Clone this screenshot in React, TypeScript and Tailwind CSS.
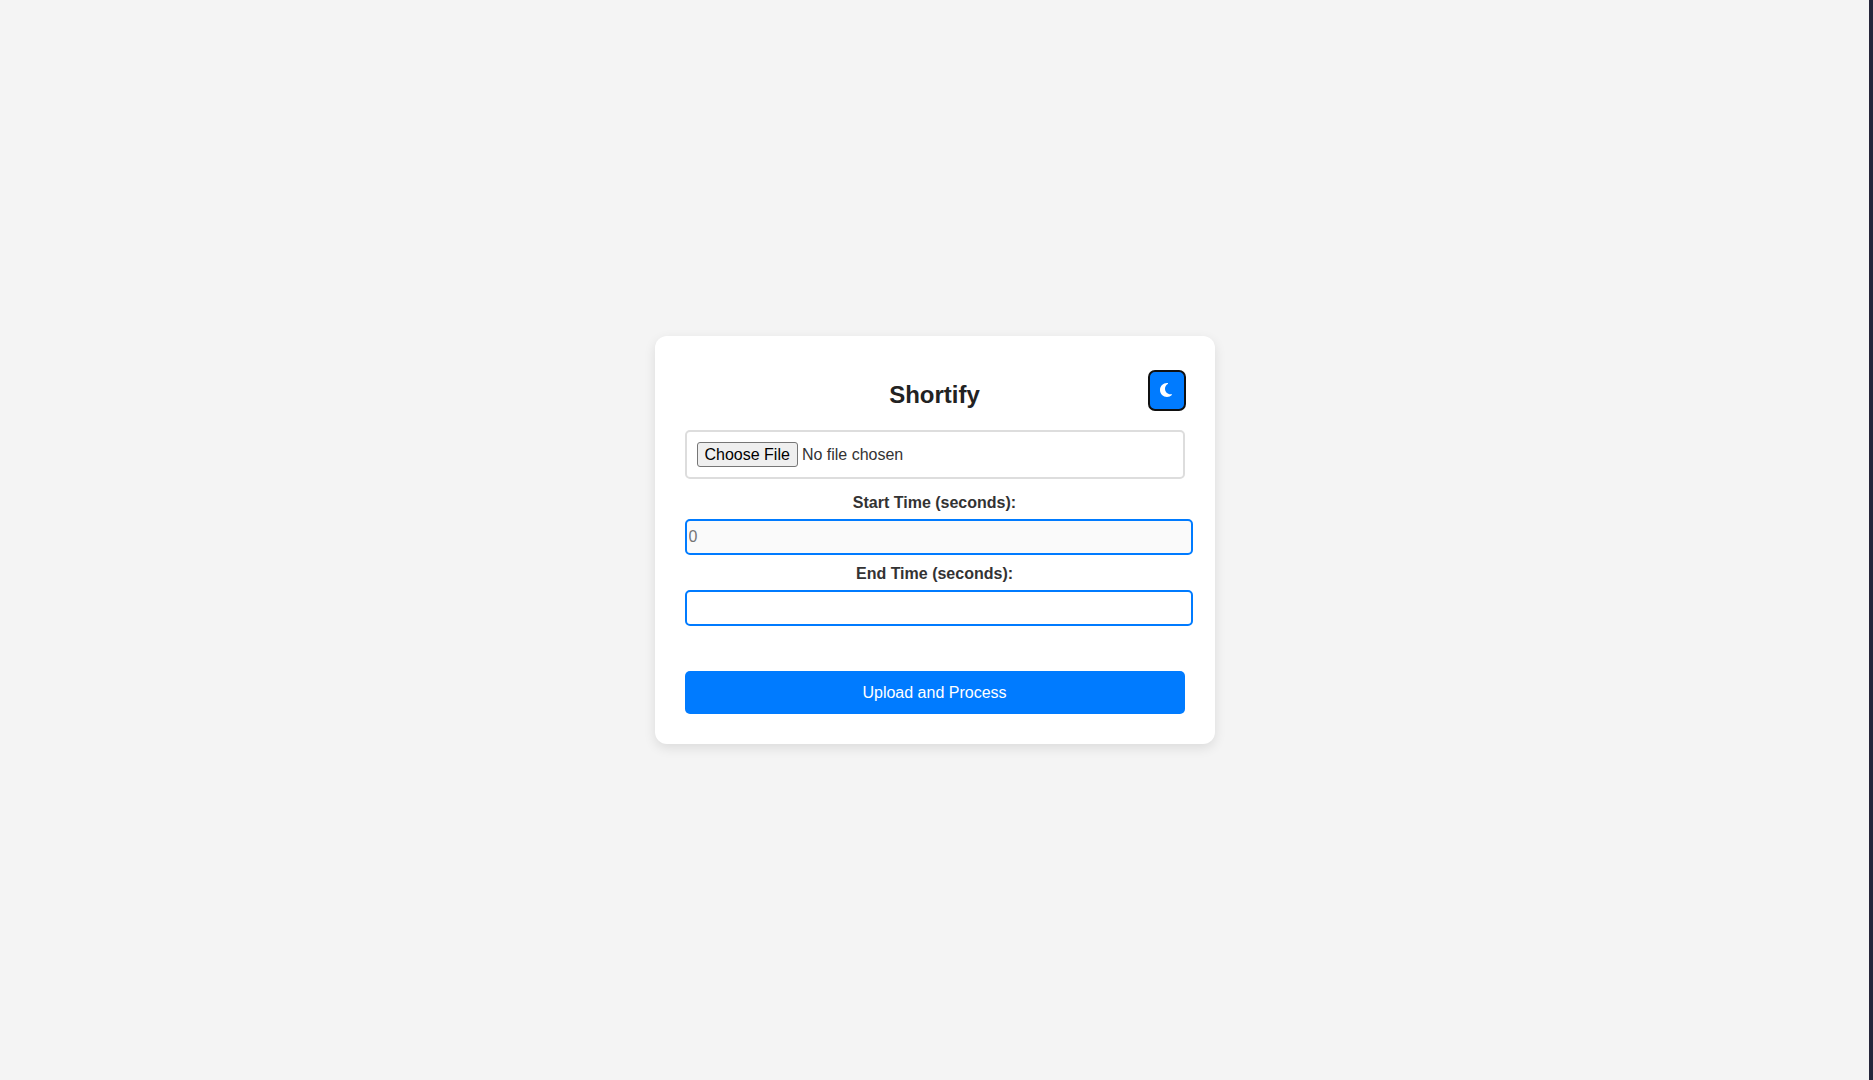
import { FaMoon } from 'react-icons/fa6';

const timeInput =
  'mt-[7px] box-content block h-7 w-full rounded-[5px] border-2 border-[#007bff] p-[2px] text-base text-[#333] placeholder:text-[#757575] outline-none';

export default function App() {
  return (
    <main className="flex min-h-screen items-center justify-center border-r-4 border-[#25253a] bg-[#f4f4f4] font-['Liberation_Sans',Arial,sans-serif] text-[#333]">
      <form
        className="relative w-full max-w-[560px] rounded-xl bg-white p-[30px] shadow-[0_4px_12px_rgba(0,0,0,0.1)]"
        onSubmit={(e) => e.preventDefault()}
      >
        <button
          type="button"
          aria-label="Toggle dark mode"
          className="absolute top-[34px] right-[29px] flex h-[41px] w-[38px] items-center justify-center rounded-[7px] border-2 border-[#101010] bg-[#007bff] pr-[2px] pb-px text-white"
        >
          <FaMoon className="h-4 w-4" aria-hidden="true" />
        </button>

        <h1 className="mt-[15px] text-center text-2xl leading-7 font-bold text-[#222]">Shortify</h1>

        <input
          type="file"
          aria-label="Video file"
          className="mt-[21px] block h-[49px] w-full rounded-[5px] border-2 border-[#ddd] p-[10px] text-base leading-5 file:me-1 file:h-[25px] file:rounded-[3px] file:border file:border-solid file:border-[#767676] file:bg-[#efefef] file:px-[7px] file:text-black"
        />

        <label htmlFor="start" className="mt-[15px] block text-center text-base leading-[18px] font-bold">
          Start Time (seconds):
        </label>
        <input id="start" type="number" placeholder="0" className={`${timeInput} bg-[#fafafa]`} />

        <label htmlFor="end" className="mt-[10px] block text-center text-base leading-[18px] font-bold">
          End Time (seconds):
        </label>
        <input id="end" type="number" className={`${timeInput} bg-white`} />

        <button
          type="submit"
          className="mt-[45px] block h-[43px] w-full rounded-[5px] bg-[#007bff] text-base text-white"
        >
          Upload and Process
        </button>
      </form>
    </main>
  );
}
